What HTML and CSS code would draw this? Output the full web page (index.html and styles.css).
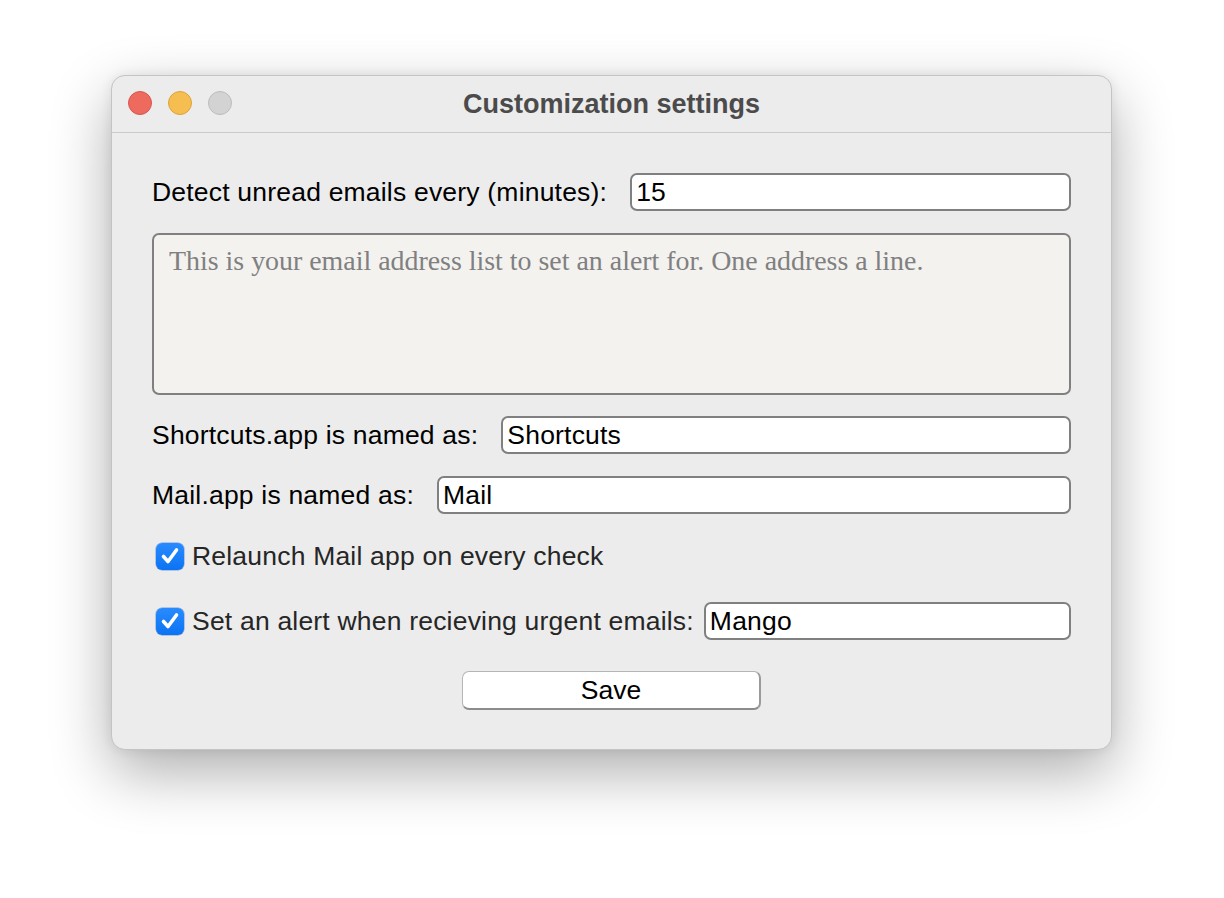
FILE: index.html
```html
<!DOCTYPE html>
<html>
<head>
<meta charset="utf-8">
<link rel="stylesheet" href="styles.css">
</head>
<body>
<div class="window">
  <div class="titlebar">
    <div class="lights">
      <span class="light red"></span>
      <span class="light yellow"></span>
      <span class="light gray"></span>
    </div>
    <div class="title">Customization settings</div>
  </div>
  <div class="content">
    <div class="row r1">
      <span class="label">Detect unread emails every (minutes):</span>
      <div class="field">15</div>
    </div>
    <div class="textarea">This is your email address list to set an alert for. One address a line.</div>
    <div class="row r2">
      <span class="label">Shortcuts.app is named as:</span>
      <div class="field">Shortcuts</div>
    </div>
    <div class="row r3">
      <span class="label">Mail.app is named as:</span>
      <div class="field">Mail</div>
    </div>
    <div class="row check-row r4">
      <span class="checkbox"><svg viewBox="0 0 28 28" width="28" height="28"><path d="M7.5 14.5 L12 19.5 L20.5 8" fill="none" stroke="#fff" stroke-width="3.6" stroke-linecap="round" stroke-linejoin="round"/></svg></span>
      <span class="check-label">Relaunch Mail app on every check</span>
    </div>
    <div class="row check-row r5">
      <span class="checkbox"><svg viewBox="0 0 28 28" width="28" height="28"><path d="M7.5 14.5 L12 19.5 L20.5 8" fill="none" stroke="#fff" stroke-width="3.6" stroke-linecap="round" stroke-linejoin="round"/></svg></span>
      <span class="check-label">Set an alert when recieving urgent emails:</span>
      <div class="field">Mango</div>
    </div>
    <div class="actions">
      <button class="save">Save</button>
    </div>
  </div>
</div>
</body>
</html>
```
FILE: styles.css
```css
html, body {
  margin: 0;
  padding: 0;
  background: #ffffff;
}
body {
  width: 1224px;
  height: 898px;
  overflow: hidden;
  font-family: "Liberation Sans", Arial, sans-serif;
}
.window {
  margin: 75px 0 0 111px;
  width: 1001px;
  height: 675px;
  box-sizing: border-box;
  background: #ececec;
  border: 1px solid #c4c4c4;
  border-radius: 14px;
  box-shadow: 0 22px 60px rgba(0,0,0,0.32), 0 0 12px rgba(0,0,0,0.08);
  overflow: hidden;
}
.titlebar {
  height: 56px;
  border-bottom: 1px solid #cacaca;
  display: flex;
  align-items: center;
  justify-content: center;
  position: relative;
}
.lights {
  position: absolute;
  left: 16px;
  top: 15px;
  display: flex;
  gap: 16px;
}
.light {
  width: 24px;
  height: 24px;
  border-radius: 50%;
  box-sizing: border-box;
}
.red { background: #ee6a5f; border: 1px solid #d8564b; }
.yellow { background: #f6be50; border: 1px solid #dca43a; }
.gray { background: #d3d3d3; border: 1px solid #bcbcbc; }
.title {
  font-weight: bold;
  font-size: 27px;
  color: #4b4b4b;
}
.content {
  padding: 40px 40px 0 40px;
  display: flex;
  flex-direction: column;
}
.row {
  display: flex;
  align-items: center;
  height: 38px;
}
.label {
  font-size: 26.5px;
  letter-spacing: 0.2px;
  color: #000;
  white-space: nowrap;
  margin-right: 23px;
}
.field {
  flex: 1;
  height: 38px;
  box-sizing: border-box;
  border: 2px solid #808080;
  border-radius: 7px;
  background: #fff;
  font-size: 26.5px;
  letter-spacing: 0.2px;
  color: #000;
  padding: 0 4px;
  display: flex;
  align-items: center;
}
.textarea {
  margin-top: 22px;
  height: 162px;
  box-sizing: border-box;
  border: 2px solid #808080;
  border-radius: 7px;
  background: #f3f2ef;
  font-family: "Liberation Serif", "Times New Roman", serif;
  font-size: 27.9px;
  color: #808080;
  padding: 10px 15px;
  white-space: nowrap;
}
.r2 { margin-top: 21px; }
.r3 { margin-top: 22px; }
.r4 { margin-top: 22px; height: 40px; }
.r5 { margin-top: 26px; }
.checkbox {
  width: 28px;
  height: 27px;
  margin-left: 4px;
  border-radius: 6px;
  background: linear-gradient(#2a8bff, #0b73f2);
  box-shadow: 0 0 0 0.5px rgba(0,80,200,0.5);
  display: flex;
  align-items: center;
  justify-content: center;
  overflow: hidden;
}
.checkbox svg { display: block; }
.check-label {
  font-size: 26.5px;
  letter-spacing: 0.2px;
  color: #262626;
  margin-left: 8px;
  white-space: nowrap;
  margin-right: 10px;
}
.actions {
  margin-top: 31px;
  display: flex;
  justify-content: center;
}
.save {
  width: 299px;
  height: 39px;
  box-sizing: border-box;
  background: #fff;
  border: 1px solid #b5b5b5;
  border-bottom: 2px solid #8c8c8c;
  border-right: 2px solid #9a9a9a;
  border-radius: 7px;
  font-family: "Liberation Sans", Arial, sans-serif;
  font-size: 26.5px;
  color: #000;
  padding: 0;
}
```
